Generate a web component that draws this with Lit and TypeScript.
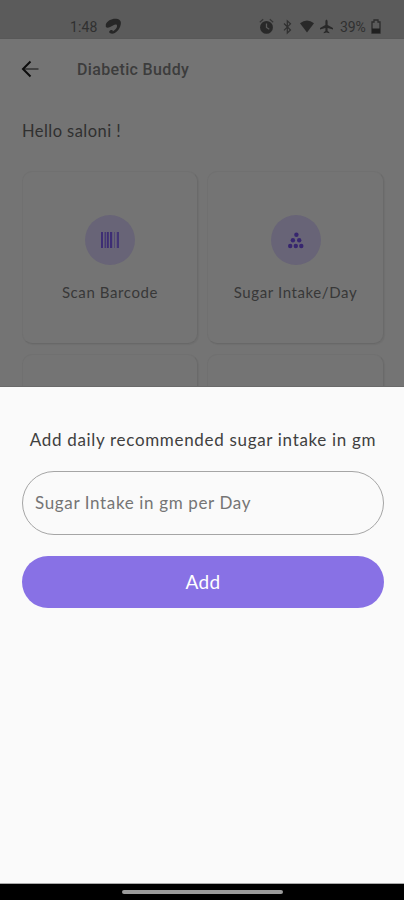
import { LitElement, html, css, svg } from "lit";
import { customElement } from "lit/decorators.js";

const barcode = svg`<svg width="18" height="16" viewBox="0 0 18 16" fill="#3d2d74">
  <rect x="0" y="0" width="2" height="16"/><rect x="3.6" y="0" width="1.2" height="16"/>
  <rect x="5.8" y="0" width="2" height="16"/><rect x="9" y="0" width="2.2" height="16"/>
  <rect x="13" y="0" width="1" height="16" opacity=".5"/><rect x="15.8" y="0" width="2.2" height="16" opacity=".85"/></svg>`;

const grains = svg`<svg width="16" height="17" viewBox="0 0 16 17" fill="#37266f">
  <circle cx="8.4" cy="2.8" r="2.2"/><circle cx="4.9" cy="8.2" r="2.2"/><circle cx="11.2" cy="8.2" r="2.2"/>
  <circle cx="2.2" cy="14" r="2.2"/><circle cx="7.8" cy="14" r="2.2"/><circle cx="13.3" cy="14" r="2.2"/></svg>`;

@customElement("app-root")
export class AppRoot extends LitElement {
  static styles = css`
    :host {
      display: flex;
      flex-direction: column;
      width: 404px;
      height: 900px;
      overflow: hidden;
      background: #fafafa;
      font-family: Lato, "Open Sans", sans-serif;
    }
    * { box-sizing: border-box; }
    svg { display: block; flex: none; }
    .behind {
      height: 387px;
      flex: none;
      overflow: hidden;
      background: #747474;
      border-bottom: 1px solid #6a6a6a;
      color: #303030;
    }
    .status {
      height: 39px;
      padding: 15px 0 0 70px;
      background: #5b5b5b;
      display: flex;
      color: #303030;
      font: 14px/24px Roboto, sans-serif;
      border-bottom: 1px solid #585858;
    }
    .time { width: 35px; letter-spacing: .1px; }
    .swirl { margin-top: 3px; }
    .icons { margin-left: 137px; }
    .pct { width: 28px; margin-left: -1px; letter-spacing: -.1px; }
    .cell { margin: 4px 0 0 3px; }
    .bar {
      height: 60px;
      padding-left: 20px;
      display: flex;
      align-items: center;
    }
    .title {
      margin: 1px 0 0 37px;
      font: 500 16px/20px Roboto, sans-serif;
      letter-spacing: .35px;
      color: #3c3c3c;
    }
    .hello {
      margin: 22px 0 0 22px;
      font-size: 16.5px;
      line-height: 20px;
      white-space: nowrap;
    }
    .hello span { letter-spacing: .45px; }
    .cards {
      margin: 30px 20px 0 22px;
      display: grid;
      grid-template-columns: 176px 177px;
      grid-auto-rows: 173px;
      gap: 10px 9px;
    }
    .card {
      border-radius: 10px;
      border: 1px solid #707070;
      border-right-color: #6a6a6a;
      border-bottom-color: #686868;
      box-shadow: 1px 1px 1px rgba(0, 0, 0, .05);
      padding-top: 43px;
      display: flex;
      flex-direction: column;
      align-items: center;
    }
    .disc {
      width: 50px;
      height: 50px;
      border-radius: 50%;
      background: #686477;
      display: flex;
      align-items: center;
      justify-content: center;
    }
    .label {
      margin-top: 17px;
      font-size: 15px;
      line-height: 20px;
      white-space: nowrap;
      letter-spacing: .6px;
      color: #383838;
    }
    .sheet {
      height: 497px;
      flex: none;
      padding: 42px 20px 0 22px;
      background: #fafafa;
      border-bottom: 1px solid #aaa;
    }
    .prompt {
      text-align: center;
      font-size: 17px;
      line-height: 22px;
      white-space: nowrap;
      letter-spacing: .68px;
      color: #404040;
    }
    .field {
      margin-top: 20px;
      height: 64px;
      border: 1px solid #a5a5a5;
      border-radius: 32px;
      padding: 0 0 1px 12px;
      display: flex;
      align-items: center;
      color: #757575;
      font-size: 17px;
      letter-spacing: .64px;
      white-space: nowrap;
    }
    .add {
      margin-top: 21px;
      width: 100%;
      height: 52px;
      border: 0;
      border-radius: 26px;
      background: #8871e5;
      color: #fff;
      font: 19px/24px Lato, sans-serif;
      letter-spacing: .4px;
      display: flex;
      align-items: center;
      justify-content: center;
      padding: 0;
    }
    .nav {
      height: 16px;
      flex: none;
      background: #000;
      display: flex;
      justify-content: center;
      padding-top: 6px;
    }
    .pill { width: 161px; height: 4px; border-radius: 2px; background: #9b9b9b; }
  `;

  render() {
    return html`
      <div class="behind">
        <div class="status">
          <span class="time">1:48</span>
          <svg class="swirl" width="17" height="17" viewBox="0 0 17 17">
            <path d="M.8 6.500C2 2.500 7 .2 11.500.7c4 .4 5 3.300 4.100 6.300-1 4.500-4.700 8.500-8.500 8.700-2.800 0-3.800-2-2-3.200 1.500-.9 2.800-.3 2.700.9 2.200-1.300 4.300-3.400 4.300-5.400C12 6 10 6.300 8 7.500 5 9.400 2 10.500.8 8.800Z" fill="#272727"/>
          </svg>
          <svg class="icons" width="82" height="20" viewBox="0 0 82 20" fill="#292929">
            <circle cx="7.500" cy="12.400" r="6.400"/>
            <path d="M.8 7.200 4.200 4.300M14.200 7.200l-3.400-2.900" stroke="#363636" stroke-width="1.200"/>
            <path d="M7.500 8.500v4l2.800 1.700" fill="none" stroke="#5b5b5b" stroke-width="1.300"/>
            <path d="m25 8.500 6.500 6.500-3.200 3V5.800l3.200 3L25 15.400" fill="none" stroke="#303030" stroke-width="1.200"/>
            <path d="M41 8.200Q48 3 55 8.200L48 17.500Z"/>
            <path d="M66.400 6.500c0-2.200 2.200-2.200 2.200 0v3.500l5.400 3v1.400l-5.400-1.500v3l1.700 1.300v1l-2.800-.7-2.800.7v-1l1.700-1.300v-3L61 14.400V13l5.400-3Z"/>
          </svg>
          <span class="pct">39%</span>
          <svg class="cell" width="10" height="15" viewBox="0 0 10 15">
            <path d="M1 3h2V1h4v2h2v11H1Z" fill="none" stroke="#2c2c2c" stroke-width="1.300"/>
            <path d="M1 9.500h8V14H1Z" fill="#202020"/>
          </svg>
        </div>
        <div class="bar">
          <svg width="20" height="20" viewBox="0 0 20 20" fill="none">
            <path d="M3 10h15.500" stroke="#333" stroke-width="1.500"/>
            <path d="M10.500 2.500 3 10l7.500 7.500" stroke="#0d0d0d" stroke-width="2"/>
          </svg>
          <span class="title">Diabetic Buddy</span>
        </div>
        <div class="hello"><span>Hello saloni !</span></div>
        <div class="cards">
          <div class="card"><div class="disc">${barcode}</div><div class="label">Scan Barcode</div></div>
          <div class="card"><div class="disc">${grains}</div><div class="label">Sugar Intake/Day</div></div>
          <div class="card"></div>
          <div class="card"></div>
        </div>
      </div>
      <div class="sheet">
        <div class="prompt">Add daily recommended sugar intake in gm</div>
        <div class="field">Sugar Intake in gm per Day</div>
        <button class="add">Add</button>
      </div>
      <div class="nav"><div class="pill"></div></div>
    `;
  }
}
